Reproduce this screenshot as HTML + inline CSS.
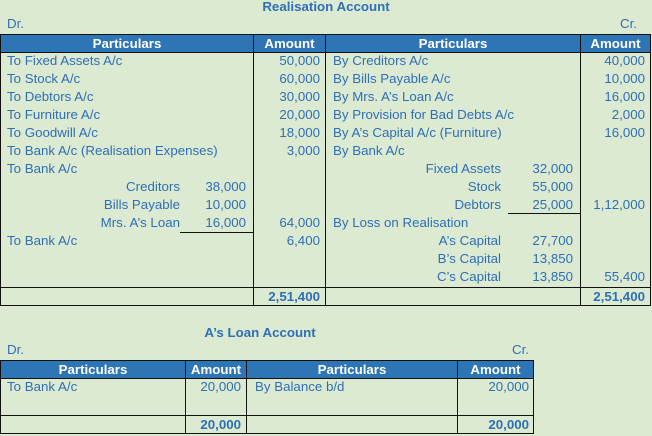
<!DOCTYPE html><html><head><style>
*{margin:0;padding:0;box-sizing:border-box}
body{width:652px;height:436px;background:#dcead2;font-family:"Liberation Sans",sans-serif;font-size:13.3px;color:#2e6fb5;position:relative;overflow:hidden}
.a{position:absolute;white-space:nowrap;line-height:18px}
.r{text-align:right}
.b{font-weight:bold}
.h{position:absolute;background:#2e75b6;color:#fff;font-weight:bold;text-align:center;line-height:18px;border:1px solid #111}
.l{position:absolute;background:#111}
</style></head><body>
<div class="a b" style="left:0;width:652px;top:-2px;text-align:center">Realisation Account</div>
<div class="a" style="left:7px;top:15px">Dr.</div>
<div class="a" style="left:620px;top:15px">Cr.</div>
<div class="h" style="left:0;top:34px;width:254px;height:19px">Particulars</div>
<div class="h" style="left:253px;top:34px;width:73px;height:19px">Amount</div>
<div class="h" style="left:325px;top:34px;width:256px;height:19px">Particulars</div>
<div class="h" style="left:580px;top:34px;width:71px;height:19px">Amount</div>
<div class="l" style="left:0;top:52px;width:1px;height:254px"></div>
<div class="l" style="left:253px;top:52px;width:1px;height:254px"></div>
<div class="l" style="left:325px;top:52px;width:1px;height:254px"></div>
<div class="l" style="left:580px;top:52px;width:1px;height:254px"></div>
<div class="l" style="left:650px;top:52px;width:1px;height:254px"></div>
<div class="l" style="left:0;top:287px;width:651px;height:1px"></div>
<div class="l" style="left:0;top:305px;width:651px;height:1px"></div>
<div class="l" style="left:180px;top:232px;width:73px;height:1px"></div>
<div class="l" style="left:508px;top:213px;width:73px;height:1px"></div>
<div class="a" style="left:7px;top:52px">To Fixed Assets A/c</div>
<div class="a" style="left:7px;top:70px">To Stock A/c</div>
<div class="a" style="left:7px;top:88px">To Debtors A/c</div>
<div class="a" style="left:7px;top:106px">To Furniture A/c</div>
<div class="a" style="left:7px;top:124px">To Goodwill A/c</div>
<div class="a" style="left:7px;top:142px">To Bank A/c (Realisation Expenses)</div>
<div class="a" style="left:7px;top:160px">To Bank A/c</div>
<div class="a r" style="left:60px;width:120px;top:178px">Creditors</div>
<div class="a r" style="left:60px;width:120px;top:196px">Bills Payable</div>
<div class="a r" style="left:60px;width:120px;top:214px">Mrs. A’s Loan</div>
<div class="a r" style="left:180px;width:66px;top:178px">38,000</div>
<div class="a r" style="left:180px;width:66px;top:196px">10,000</div>
<div class="a r" style="left:180px;width:66px;top:214px">16,000</div>
<div class="a" style="left:7px;top:232px">To Bank A/c</div>
<div class="a r" style="left:254px;width:66px;top:52px">50,000</div>
<div class="a r" style="left:254px;width:66px;top:70px">60,000</div>
<div class="a r" style="left:254px;width:66px;top:88px">30,000</div>
<div class="a r" style="left:254px;width:66px;top:106px">20,000</div>
<div class="a r" style="left:254px;width:66px;top:124px">18,000</div>
<div class="a r" style="left:254px;width:66px;top:142px">3,000</div>
<div class="a r" style="left:254px;width:66px;top:214px">64,000</div>
<div class="a r" style="left:254px;width:66px;top:232px">6,400</div>
<div class="a r b" style="left:254px;width:66px;top:288px">2,51,400</div>
<div class="a" style="left:333px;top:52px">By Creditors A/c</div>
<div class="a" style="left:333px;top:70px">By Bills Payable A/c</div>
<div class="a" style="left:333px;top:88px">By Mrs. A’s Loan A/c</div>
<div class="a" style="left:333px;top:106px">By Provision for Bad Debts A/c</div>
<div class="a" style="left:333px;top:124px">By A’s Capital A/c (Furniture)</div>
<div class="a" style="left:333px;top:142px">By Bank A/c</div>
<div class="a r" style="left:380px;width:121px;top:160px">Fixed Assets</div>
<div class="a r" style="left:380px;width:121px;top:178px">Stock</div>
<div class="a r" style="left:380px;width:121px;top:196px">Debtors</div>
<div class="a" style="left:333px;top:214px">By Loss on Realisation</div>
<div class="a r" style="left:380px;width:121px;top:232px">A’s Capital</div>
<div class="a r" style="left:380px;width:121px;top:250px">B’s Capital</div>
<div class="a r" style="left:380px;width:121px;top:268px">C’s Capital</div>
<div class="a r" style="left:508px;width:65px;top:160px">32,000</div>
<div class="a r" style="left:508px;width:65px;top:178px">55,000</div>
<div class="a r" style="left:508px;width:65px;top:196px">25,000</div>
<div class="a r" style="left:508px;width:65px;top:232px">27,700</div>
<div class="a r" style="left:508px;width:65px;top:250px">13,850</div>
<div class="a r" style="left:508px;width:65px;top:268px">13,850</div>
<div class="a r" style="left:581px;width:64px;top:52px">40,000</div>
<div class="a r" style="left:581px;width:64px;top:70px">10,000</div>
<div class="a r" style="left:581px;width:64px;top:88px">16,000</div>
<div class="a r" style="left:581px;width:64px;top:106px">2,000</div>
<div class="a r" style="left:581px;width:64px;top:124px">16,000</div>
<div class="a r" style="left:581px;width:64px;top:196px">1,12,000</div>
<div class="a r" style="left:581px;width:64px;top:268px">55,400</div>
<div class="a r b" style="left:581px;width:64px;top:288px">2,51,400</div>
<div class="a b" style="left:0;width:520px;top:324px;text-align:center">A’s Loan Account</div>
<div class="a" style="left:7px;top:341px">Dr.</div>
<div class="a" style="left:512px;top:341px">Cr.</div>
<div class="h" style="left:0;top:360px;width:186px;height:19px">Particulars</div>
<div class="h" style="left:185px;top:360px;width:62px;height:19px">Amount</div>
<div class="h" style="left:246px;top:360px;width:212px;height:19px">Particulars</div>
<div class="h" style="left:457px;top:360px;width:77px;height:19px">Amount</div>
<div class="l" style="left:0;top:378px;width:1px;height:56px"></div>
<div class="l" style="left:185px;top:378px;width:1px;height:56px"></div>
<div class="l" style="left:246px;top:378px;width:1px;height:56px"></div>
<div class="l" style="left:457px;top:378px;width:1px;height:56px"></div>
<div class="l" style="left:533px;top:378px;width:1px;height:56px"></div>
<div class="l" style="left:0;top:415px;width:534px;height:1px"></div>
<div class="l" style="left:0;top:433px;width:534px;height:1px"></div>
<div class="a" style="left:7px;top:378px">To Bank A/c</div>
<div class="a r" style="left:186px;width:55px;top:378px">20,000</div>
<div class="a" style="left:255px;top:378px">By Balance b/d</div>
<div class="a r" style="left:458px;width:71px;top:378px">20,000</div>
<div class="a r b" style="left:186px;width:55px;top:416px">20,000</div>
<div class="a r b" style="left:458px;width:71px;top:416px">20,000</div>
</body></html>
